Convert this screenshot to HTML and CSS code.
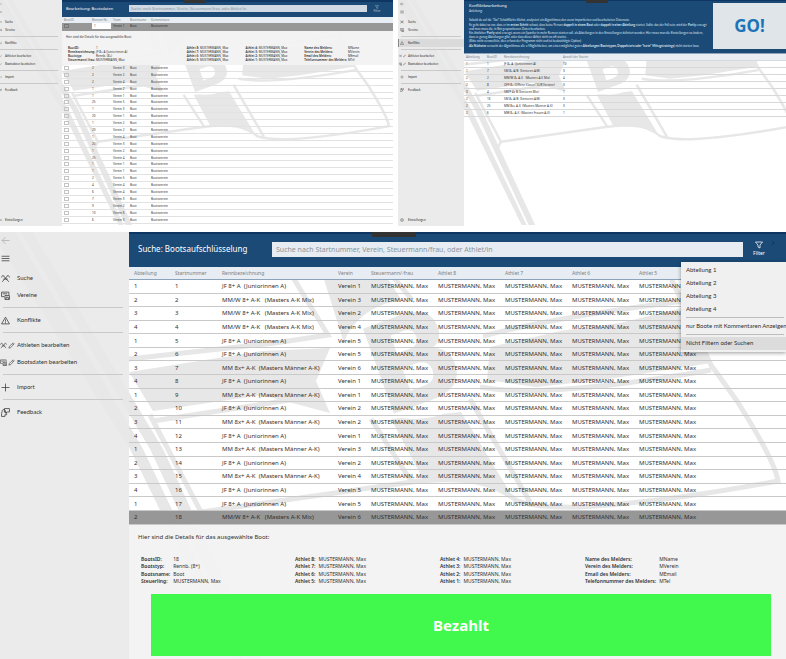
FILE: index.html
```html
<!DOCTYPE html>
<html lang="de">
<head>
<meta charset="utf-8">
<title>Regatta-Verwaltung</title>
<link rel="stylesheet" href="styles.css">
</head>
<body>
<svg class="defs" aria-hidden="true">
  <symbol id="i-back" viewBox="0 0 16 16"><path d="M15 8H2M8 2 2 8l6 6"/></symbol>
  <symbol id="i-menu" viewBox="0 0 16 16"><path d="M1 4h14M1 8h14M1 12h14"/></symbol>
  <symbol id="i-search" viewBox="0 0 16 16"><path d="M2 14 11 4M14 14 5 4M1 6c0-3 3-4 5-2M15 6c0-3-3-4-5-2M4 9l8 0"/></symbol>
  <symbol id="i-club" viewBox="0 0 16 16"><path d="M6 10H1V2h13v5M7 8h8v7H7zM9 15v-4h4v4M3 5h8"/></symbol>
  <symbol id="i-warn" viewBox="0 0 16 16"><path d="M8 2 15 14H1zM8 6v4M8 11v2"/></symbol>
  <symbol id="i-pen" viewBox="0 0 16 16"><path d="M2 14l1-4 9-8 2 2-8 9zM10 4l2 2"/></symbol>
  <symbol id="i-plus" viewBox="0 0 16 16"><path d="M8 1v14M1 8h14"/></symbol>
  <symbol id="i-feed" viewBox="0 0 16 16"><path class="solid" d="M6 1h9v6h-4l-2 2V7H6zM2 6a3 3 0 1 1 5 2l3 2v2H7v3H1v-5z"/></symbol>
  <symbol id="i-gear" viewBox="0 0 16 16"><circle cx="8" cy="8" r="6"/><circle cx="8" cy="8" r="2"/></symbol>
  <symbol id="i-filter" viewBox="0 0 16 16"><path d="M1 2h14L10 8v6l-4-2V8z"/></symbol>
  <symbol id="i-next" viewBox="0 0 16 16"><path d="M5 2l6 6-6 6"/></symbol>
  <g id="flag">
    <path class="fill" d="M129 371 262 350 330 347 316 380 330 412 262 394 153 410ZM315 250 370 250 415 320 345 345ZM490 346 560 330 620 322 690 305 711 362 602 379 536 386 487 379Z"/>
    <path class="fill" d="M-10 230H15L143 448 252 676H242L130 448ZM20 230H32L163 448 269 676H256L150 448ZM391 418 461 411 514 498Q500 483 481 481L424 480Z"/>
    <path class="line" d="M150 414 201 511 190 531M153 420 310 396M129 358 275 342 328 334 280 255M395 278 425 315M201 511 405 482Q445 476 477 481 500 486 517 500 540 507 580 506 660 502 778 480 775 460 737 400L711 364 670 275M480 386Q545 398 711 369M371 418 411 480M470 398 530 501M483 335Q560 315 685 300"/>
    <ellipse class="disc" cx="414" cy="358" rx="73" ry="60"/>
    <text class="mark" x="412" y="403" text-anchor="middle" transform="rotate(-20 412 357)">B</text>
  </g>
</svg>

<main class="board">
  <section class="window small">
    <svg class="backdrop" viewBox="7 230 781 447" preserveAspectRatio="xMinYMin slice" aria-hidden="true"><use href="#flag"/></svg>
    <nav class="side cut">
      <a href="#"><svg><use href="#i-back"/></svg></a>
      <a href="#"><svg><use href="#i-menu"/></svg></a>
      <a href="#"><svg><use href="#i-search"/></svg>Suche</a>
      <a href="#"><svg><use href="#i-club"/></svg>Vereine</a>
      <hr>
      <a href="#"><svg><use href="#i-warn"/></svg>Konflikte</a>
      <hr>
      <a href="#"><svg><use href="#i-pen"/></svg>Athleten bearbeiten</a>
      <a href="#"><svg><use href="#i-pen"/></svg>Bootsdaten bearbeiten</a>
      <hr>
      <a href="#"><svg><use href="#i-plus"/></svg>Import</a>
      <hr>
      <a href="#"><svg><use href="#i-feed"/></svg>Feedback</a>
      <a class="settings" href="#"><svg><use href="#i-gear"/></svg>Einstellungen</a>
    </nav>
    <div class="content">
      <header class="bar">
        <span class="grip"></span>
        <h2>Bearbeitung: Bootsdaten</h2>
        <input type="text" aria-label="Suche" placeholder="Suche nach Startnummer, Verein, Steuermann/frau, oder Athlet/in">
        <button class="filter" type="button"><svg><use href="#i-filter"/></svg>Filter</button>
      </header>
      <table class="boats">
        <colgroup><col class="b1"><col class="b2"><col class="b3"><col class="b4"><col></colgroup>
        <thead><tr><th>BootID</th><th>Rennen Nr.</th><th>Team</th><th>Bootsname</th><th>Kommentare</th></tr></thead>
        <tbody>
          <tr class="chosen"><td><input type="checkbox" aria-label="Boot 1"></td><td><select aria-label="Rennen Nr."><option>1</option></select></td><td>Verein 1</td><td>Boot</td><td>Bootsverein</td></tr>
        </tbody>
      </table>
      <div class="details">
        <p>Hier sind die Details für das ausgewählte Boot:</p>
        <div class="facts">
          <dl><dt>BootID:</dt><dd>1</dd><dt>Rennbezeichnung:</dt><dd>JF 8+ A (Juniorinnen A)</dd><dt>Bootstyp:</dt><dd>Rennb. (8+)</dd><dt>Steuermann/-frau:</dt><dd>MUSTERMANN, Max</dd></dl>
          <dl><dt>Athlet 8:</dt><dd>MUSTERMANN, Max</dd><dt>Athlet 7:</dt><dd>MUSTERMANN, Max</dd><dt>Athlet 6:</dt><dd>MUSTERMANN, Max</dd><dt>Athlet 5:</dt><dd>MUSTERMANN, Max</dd></dl>
          <dl><dt>Athlet 4:</dt><dd>MUSTERMANN, Max</dd><dt>Athlet 3:</dt><dd>MUSTERMANN, Max</dd><dt>Athlet 2:</dt><dd>MUSTERMANN, Max</dd><dt>Athlet 1:</dt><dd>MUSTERMANN, Max</dd></dl>
          <dl><dt>Name des Melders:</dt><dd>MName</dd><dt>Verein des Melders:</dt><dd>MVerein</dd><dt>Email des Melders:</dt><dd>MEmail</dd><dt>Telefonnummer des Melders:</dt><dd>MTel</dd></dl>
        </div>
      </div>
      <table class="boats list">
        <colgroup><col class="b1"><col class="b2"><col class="b3"><col class="b4"><col></colgroup>
        <tbody id="boats"></tbody>
      </table>
    </div>
  </section>

  <section class="window small">
    <svg class="backdrop" viewBox="-3 230 771 447" preserveAspectRatio="xMinYMin slice" aria-hidden="true"><use href="#flag"/></svg>
    <nav class="side">
      <a href="#"><svg><use href="#i-back"/></svg></a>
      <a href="#"><svg><use href="#i-menu"/></svg></a>
      <a href="#"><svg><use href="#i-search"/></svg>Suche</a>
      <a href="#"><svg><use href="#i-club"/></svg>Vereine</a>
      <hr>
      <a class="current" href="#"><svg><use href="#i-warn"/></svg>Konflikte</a>
      <hr>
      <a class="double" href="#"><svg><use href="#i-search"/></svg><svg><use href="#i-pen"/></svg>Athleten bearbeiten</a>
      <a class="double" href="#"><svg><use href="#i-club"/></svg><svg><use href="#i-pen"/></svg>Bootsdaten bearbeiten</a>
      <hr>
      <a href="#"><svg><use href="#i-plus"/></svg>Import</a>
      <hr>
      <a href="#"><svg><use href="#i-feed"/></svg>Feedback</a>
      <a class="settings" href="#"><svg><use href="#i-gear"/></svg>Einstellungen</a>
    </nav>
    <div class="content">
      <header class="guide">
        <span class="grip"></span>
        <div class="guide-text">
          <h2>Konfliktbearbeitung</h2>
          <h3>Anleitung:</h3>
          <p class="first">Sobald du auf die "Go!" Schaltfläche klickst, analysiert ein Algorithmus den zuvor importierten und bearbeiteten Datensatz.</p>
          <p>Es geht dabei so vor, dass er im <b>ersten Schritt</b> schaut, dass keine Person <b>doppelt in einem Boot</b> oder <b>doppelt in einer Abteilung</b> startet. Sollte das der Fall sein, wird der <b>Partly</b> erzeugt und man muss die, in Rot gesprochenen Daten bearbeiten.</p>
          <p>Ein ähnlicher <b>Partly</b> wird erzeugt, wenn ein Sportler in mehr Rennen starten soll, als Abteilungen in den Einstellungen definiert wurden. Hier muss man die Einstellungen so ändern, dass es genug Abteilungen gibt, oder dass dieser Athlet nicht so oft startet.</p>
          <p>(Bitte nicht verzweifeln, dies erfasst der Programm nicht und ist beabsichtigte Option)</p>
          <p class="last"><b>Als Nächstes</b> versucht der Algorithmus alle x Möglichkeiten, um einen möglichst guten <b>Abteilungen/Bootstypen, Doppelstarts oder "harte" Mittagstrainings)</b> nicht starten lasse</p>
        </div>
        <button class="go" type="button">GO!</button>
      </header>
      <table class="conflicts">
        <colgroup><col class="k1"><col class="k2"><col class="k3"><col></colgroup>
        <thead><tr><th>Abteilung</th><th>BootID</th><th>Rennbezeichnung</th><th>Anzahl der Starter</th></tr></thead>
        <tbody id="conflicts"></tbody>
      </table>
    </div>
  </section>

  <section class="window large">
    <svg class="backdrop" viewBox="0 231 786 428" preserveAspectRatio="xMinYMin slice" aria-hidden="true"><use href="#flag"/></svg>
    <nav class="side">
      <a class="back" href="#"><svg><use href="#i-back"/></svg></a>
      <a class="burger" href="#"><svg><use href="#i-menu"/></svg></a>
      <a href="#"><svg><use href="#i-search"/></svg>Suche</a>
      <a href="#"><svg><use href="#i-club"/></svg>Vereine</a>
      <hr>
      <a href="#"><svg><use href="#i-warn"/></svg>Konflikte</a>
      <hr>
      <a class="double" href="#"><svg><use href="#i-search"/></svg><svg><use href="#i-pen"/></svg>Athleten bearbeiten</a>
      <a class="double" href="#"><svg><use href="#i-club"/></svg><svg><use href="#i-pen"/></svg>Bootsdaten bearbeiten</a>
      <hr>
      <a href="#"><svg><use href="#i-plus"/></svg>Import</a>
      <hr>
      <a href="#"><svg><use href="#i-feed"/></svg>Feedback</a>
    </nav>
    <div class="content">
      <header class="bar">
        <span class="grip"></span>
        <h1>Suche: Bootsaufschlüsselung</h1>
        <input type="text" aria-label="Suche" placeholder="Suche nach Startnummer, Verein, Steuermann/frau, oder Athlet/in">
        <button class="filter" type="button"><svg><use href="#i-filter"/></svg>Filter</button>
        <svg class="next" aria-hidden="true"><use href="#i-next"/></svg>
        <div class="menu">
          <button type="button">Abteilung 1</button>
          <button type="button">Abteilung 2</button>
          <button type="button">Abteilung 3</button>
          <button type="button">Abteilung 4</button>
          <hr>
          <button type="button">nur Boote mit Kommentaren Anzeigen</button>
          <hr>
          <button class="on" type="button">Nicht Filtern oder Suchen</button>
        </div>
      </header>
      <table class="starts">
        <colgroup><col class="s1"><col class="s2"><col class="s3"><col class="s4"><col class="s5"><col class="s5"><col class="s5"><col class="s5"><col></colgroup>
        <thead><tr><th>Abteilung</th><th>Startnummer</th><th>Rennbezeichnung</th><th>Verein</th><th>Steuermann/-frau</th><th>Athlet 8</th><th>Athlet 7</th><th>Athlet 6</th><th>Athlet 5</th></tr></thead>
        <tbody id="starts"></tbody>
      </table>
      <div class="details">
        <p>Hier sind die Details für das ausgewählte Boot:</p>
        <div class="facts">
          <dl><dt>BootsID:</dt><dd>18</dd><dt>Bootstyp:</dt><dd>Rennb. (8+)</dd><dt>Bootsname:</dt><dd>Boot</dd><dt>Steuerling:</dt><dd>MUSTERMANN, Max</dd></dl>
          <dl><dt>Athlet 8:</dt><dd>MUSTERMANN, Max</dd><dt>Athlet 7:</dt><dd>MUSTERMANN, Max</dd><dt>Athlet 6:</dt><dd>MUSTERMANN, Max</dd><dt>Athlet 5:</dt><dd>MUSTERMANN, Max</dd></dl>
          <dl><dt>Athlet 4:</dt><dd>MUSTERMANN, Max</dd><dt>Athlet 3:</dt><dd>MUSTERMANN, Max</dd><dt>Athlet 2:</dt><dd>MUSTERMANN, Max</dd><dt>Athlet 1:</dt><dd>MUSTERMANN, Max</dd></dl>
          <dl><dt>Name des Melders:</dt><dd>MName</dd><dt>Verein des Melders:</dt><dd>MVerein</dd><dt>Email des Melders:</dt><dd>MEmail</dd><dt>Telefonnummer des Melders:</dt><dd>MTel</dd></dl>
        </div>
        <button class="paid" type="button">Bezahlt</button>
      </div>
    </div>
  </section>
</main>
<script src="app.js"></script>
</body>
</html>
```
FILE: styles.css
```css
* { box-sizing: border-box; }

body {
  margin: 0;
  background: #fff;
  color: #303030;
  font-family: "Noto Sans", "Open Sans", sans-serif;
  font-size: 6px;
  line-height: 8px;
}

h1, h2, h3, p, dl, dd { margin: 0; font-weight: 400; }
button, input, select { margin: 0; font: inherit; color: inherit; border: 0; border-radius: 0; }
button { padding: 0; background: none; }
a { color: inherit; text-decoration: none; }
.defs { position: absolute; width: 0; height: 0; }

.fill, .mark { fill: #e7e7e7; }
.line { fill: none; stroke: #e7e7e7; stroke-width: 5; }
.disc { fill: #fff; }
.mark { font: 700 124px "DejaVu Sans", sans-serif; }

.board {
  display: grid;
  grid-template-columns: 393fr 388fr;
  grid-template-rows: auto 1fr;
  gap: 6px 5px;
  min-height: 100vh;
}

.window {
  position: relative;
  z-index: 0;
  display: grid;
  overflow: hidden;
}
.small { grid-template-columns: 66px 1fr; font-size: 3px; line-height: 4px; }
.small:first-child { grid-template-columns: 62px 1fr; }
.large { grid-column: 1 / -1; grid-template-columns: 129px 1fr; }
.backdrop { position: absolute; inset: 0; width: 100%; height: 100%; z-index: -1; }
.content { display: flex; flex-direction: column; min-width: 0; }

/* navigation */
.side {
  display: flex;
  flex-direction: column;
  background: rgba(232, 232, 232, 0.88);
  font-family: Lato, "Noto Sans", sans-serif;
}
.side a { display: flex; align-items: center; height: 17px; gap: 7px; padding-left: 1px; white-space: nowrap; }
.side svg { width: 9px; height: 9px; flex: none; fill: none; stroke: #333; stroke-width: 1.3; }
.side .solid { fill: #111; stroke: none; }
.side hr { width: 120px; margin: 3px 0 4px 3px; border: 0; border-top: 1px solid #c9c9c9; }
.large .back svg { stroke: #aaa; }
.large .burger { height: 20px; margin-bottom: 1px; }
.large .double { gap: 1px; padding-left: 0; }
.large .double svg { width: 7px; height: 7px; }
.large .double svg + svg { margin-right: 1px; }
.small .side { padding-bottom: 2px; }
.small .side a { height: 8px; gap: 4px; padding-left: 2px; }
.small .side a:nth-child(2) { margin-bottom: 2px; }
.small .side svg { width: 4px; height: 4px; }
.small .side hr { width: 60px; margin: 2px 0 2px 3px; }
.small .side .double { gap: 1px; padding-left: 1px; }
.small .side .double svg { width: 3px; }
.small .side .double svg + svg { margin-right: 1px; }
.small .cut a { gap: 3px; padding-left: 0; }
.small .cut svg { width: 2px; }
.small .cut hr { width: 58px; margin-left: 0; }
.small .side .current { background: #dadada; box-shadow: inset 1px 0 #888; }
.small .side .settings { margin-top: auto; }

/* blue bars */
.bar {
  position: relative;
  display: flex;
  align-items: center;
  height: 35px;
  padding: 0 11px 2px 9px;
  background: #1b4a76;
  border-top: 2px solid #0d3762;
  color: #fff;
}
.bar h1 { width: 134px; font-size: 8px; line-height: 12px; white-space: nowrap; }
.bar input { flex: 1; min-width: 0; height: 15px; padding: 0 4px; background: #e6ecf1; font-size: 7px; }
.bar input::placeholder { color: #8d949a; opacity: 1; }
.filter { display: flex; flex-direction: column; align-items: center; width: 32px; font-size: 5px; line-height: 8px; }
.filter svg { width: 8px; height: 8px; fill: none; stroke: #fff; stroke-width: 1.5; }
.next { position: absolute; top: 6px; right: 10px; width: 6px; height: 6px; fill: none; stroke: #0d2c4a; stroke-width: 2; }
.grip { position: absolute; top: -2px; left: 243px; width: 44px; height: 5px; background: #333; }
.small .bar { height: 17px; padding: 0 6px 2px 4px; }
.small .bar h2 { width: 63px; font-size: 4px; line-height: 6px; white-space: nowrap; }
.small .bar input { height: 7px; padding: 0 2px; background: #cfdae5; font-family: Lato, sans-serif; font-size: 4px; }
.small .filter { width: 20px; font-size: 3px; line-height: 4px; color: #b6c6d6; }
.small .filter svg { width: 4px; height: 4px; stroke: #b6c6d6; }
.small .grip { left: 122px; width: 22px; height: 3px; }

/* filter menu */
.menu {
  position: absolute;
  z-index: 2;
  top: 28px;
  right: 0;
  width: 105px;
  padding: 2px 0;
  background: #f0f0f0;
  color: #303030;
  box-shadow: 0 1px 4px rgba(0, 0, 0, 0.4);
  font-family: Lato, "Noto Sans", sans-serif;
}
.menu button { display: block; width: 100%; height: 13px; padding-left: 5px; text-align: left; white-space: nowrap; }
.menu hr { margin: 1px 2px 2px 5px; border: 0; border-top: 1px solid #bcbcbc; }
.menu .on { background: #dcdcdc; }

/* tables */
table { width: 100%; table-layout: fixed; border-collapse: collapse; }
th, td { padding: 0 0 0 5px; text-align: left; font-weight: 400; white-space: pre; }
thead th { background: #e7edf2; color: #7c8186; }
tbody tr { border-bottom: 1px solid #c9c9c9; }
.starts { height: 258px; }
.starts thead th { height: 13px; font-size: 5px; border-bottom: 1px solid #8ba4bc; }
.chosen { background: #979797; }
.s1 { width: 41px; } .s2 { width: 47px; } .s3 { width: 116px; } .s4 { width: 33px; } .s5 { width: 67px; }

.boats th, .boats td, .conflicts th, .conflicts td { padding-left: 2px; }
.boats thead th, .conflicts thead th { height: 6px; }
.boats tbody tr, .conflicts tbody tr { height: 7px; border-color: #e2e2e2; }
.boats .chosen { background: #979797; border-color: #979797; }
.list { height: 159px; margin-bottom: 2px; }
.boats.list tbody tr { height: 6px; }
.b1 { width: 28px; } .b2 { width: 21px; } .b3 { width: 17px; } .b4 { width: 21px; }
.boats input { display: block; appearance: none; width: 5px; height: 4px; border: 1px solid #c4c4c4; }
.boats .chosen input { border-color: #777; }
.boats select { display: block; appearance: none; width: 19px; height: 6px; padding: 0 2px; background: #fff; line-height: 4px; }

.conflicts thead th { border-bottom: 1px solid #d4dae0; }
.conflicts tbody tr { border-color: #d8d8d8; }
.k1 { width: 21px; } .k2 { width: 17px; } .k3 { width: 59px; }

/* boat details */
.details { flex: 1; padding: 8px 15px 4px 9px; background: rgba(242, 242, 242, 0.94); }
.facts { display: grid; grid-template-columns: 154fr 145fr 145fr 186fr; padding: 15px 0 8px 3px; font-size: 5px; }
.facts dl { display: grid; grid-template-columns: auto 1fr; grid-template-rows: repeat(4, 1fr); height: 30px; line-height: 7px; column-gap: 3px; white-space: nowrap; }
.facts dt { font-weight: 600; }
.paid { display: block; width: calc(100% - 13px); height: 62px; margin-left: 13px; background: #40f94c; color: #fff; font-size: 15px; font-weight: 700; line-height: 20px; }
.small .details { flex: none; padding: 4px 0 2px 4px; height: 34px; }
.small .facts { grid-template-columns: 119fr 59fr 59fr 89fr; padding: 7px 0 0 2px; font-size: 3px; }
.small .facts dl { height: 16px; line-height: 4px; column-gap: 1px; }

/* conflict guide */
.guide { position: relative; display: flex; height: 54px; padding: 2px 0 4px 5px; background: #1b4a76; border-top: 1px solid #0d3762; border-bottom: 1px solid #8ba4bc; color: #dbe5ee; }
.guide-text { flex: 1; min-width: 0; padding-right: 5px; font-family: Lato, "Noto Sans", sans-serif; }
.guide h2 { margin-bottom: 1px; color: #fff; font-family: "Noto Sans", sans-serif; font-size: 4px; line-height: 5px; }
.guide h3 { margin-bottom: 5px; font-size: 3px; line-height: 4px; }
.guide .first, .guide p:nth-last-child(2) { margin-bottom: 1px; }
.guide .grip { top: -1px; left: 122px; }
.go { width: 73px; background: #dfe5e9; color: #1b74b8; font-size: 17px; font-weight: 700; line-height: 20px; }
```
FILE: app.js
```js
const row = (cells, cls) =>
  `<tr${cls ? ` class="${cls}"` : ""}>${cells.map((c) => `<td>${c}</td>`).join("")}</tr>`;
const fill = (id, html) => { document.getElementById(id).innerHTML = html; };

const JF = "JF 8+ A  (Juniorinnen A)";
const MIX = "MM/W 8+ A-K   (Masters A-K Mix)";
const MM = "MM 8x+ A-K  (Masters Männer A-K)";
const races = [JF, MIX, MIX, MIX, JF, JF, MM, JF, MM, JF, MM, JF, MM, JF, MM, JF, JF, MIX];
const clubs = [1, 3, 2, 4, 5, 5, 6, 1, 1, 2, 2, 1, 3, 2, 4, 5, 5, 6];
fill("starts", races.map((race, i) => row(
  [(i % 4) + 1, i + 1, race, `Verein ${clubs[i]}`, ...Array(5).fill("MUSTERMANN, Max")],
  i === 17 ? "chosen" : ""
)).join(""));

const boats = [
  [2, 3], [2, 2], [2, 4], [1, 2], [1, 1], [25, 5], [1, 3], [20, 1], [1, 2], [20, 2], [1, 4], [20, 3],
  [1, 2], [25, 4], [1, 1], [1, 1], [2, 5], [4, 4], [6, 4], [7, 3], [9, 2], [10, 6], [6, 3]
];
fill("boats", boats.map(([race, club], i) => row([
  `<input type="checkbox" aria-label="Boot ${i + 2}">`, race, `Verein ${club}`, "Boot", "Bootsverein"
])).join(""));

fill("conflicts", [
  [1, 1, "JF 8+ A  (Juniorinnen A)", 10],
  [1, 7, "SM 8+ A/B  (Senioren A/B)", 3],
  [2, 2, "MM/W 8+ A-K   (Masters A-K Mix)", 4],
  [2, 8, "OFF 8+ (Offene Klasse/ SUR Vereine)", 3],
  [3, 4, "SM/F 4x B (Senioren Mix)", 1],
  [2, 16, "SM 8+ A/B  (Senioren A/B)", 3],
  [2, 25, "MM 8x+ A-K  (Masters Männer A-K)", 3],
  [2, 6, "MW 8+ A-K  (Masters Frauen A-K)", 1]
].map((cells) => row(cells)).join(""));
```
